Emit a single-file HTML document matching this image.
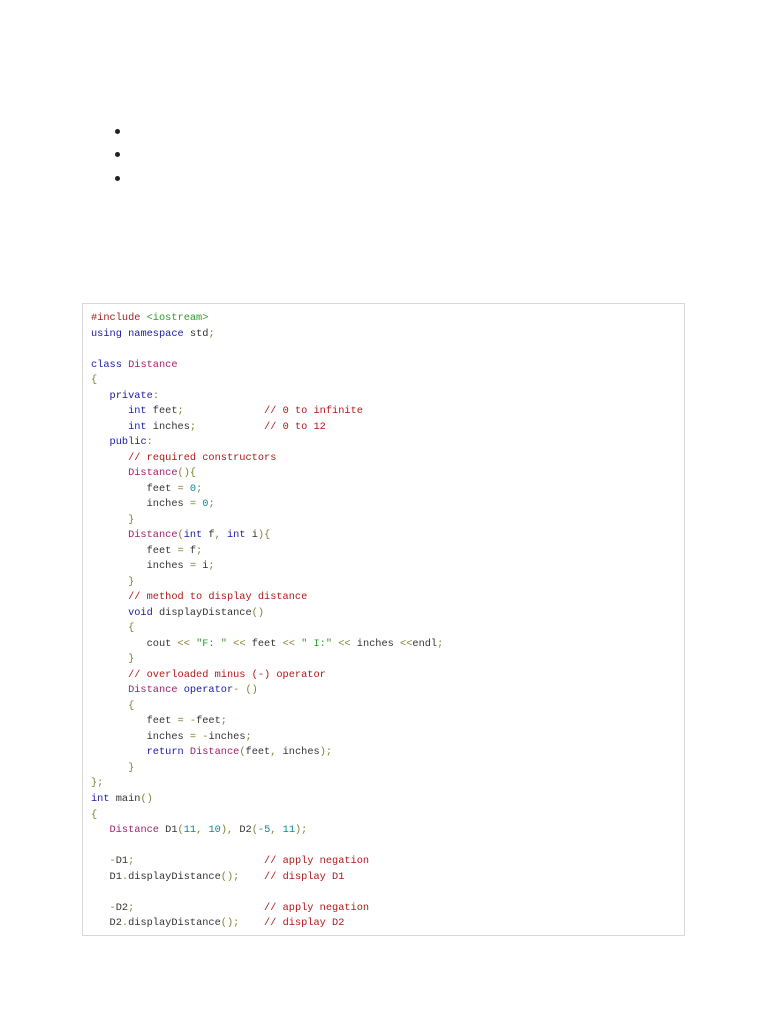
<!DOCTYPE html>
<html><head><meta charset="utf-8"><style>
body{margin:0;background:#fff;width:768px;height:1024px;position:relative;font-family:"Liberation Sans",sans-serif}
.b{position:absolute;left:115px;width:5px;height:5px;border-radius:50%;background:#222}
.box{position:absolute;left:82px;top:303px;width:601px;height:631px;border:1px solid #d8d8d8;background:#fff}
pre{margin:0;position:absolute;left:8px;top:7px;font-family:"Liberation Mono",monospace;font-size:10.3px;line-height:15.51px;color:#333}
.k{color:#1a1aa6}.c{color:#b01818}.t{color:#a0206e}.p{color:#808030}.n{color:#008c8c}.s{color:#2a9d2a}.pp{color:#9b1c1c}
</style></head><body>
<div class="b" style="top:129px"></div>
<div class="b" style="top:152px"></div>
<div class="b" style="top:176px"></div>
<div class="box"><pre><span class="pp">#include</span> <span class="s">&lt;iostream&gt;</span>
<span class="k">using</span> <span class="k">namespace</span> std<span class="p">;</span>

<span class="k">class</span> <span class="t">Distance</span>
<span class="p">{</span>
   <span class="k">private</span><span class="p">:</span>
      <span class="k">int</span> feet<span class="p">;</span>             <span class="c">// 0 to infinite</span>
      <span class="k">int</span> inches<span class="p">;</span>           <span class="c">// 0 to 12</span>
   <span class="k">public</span><span class="p">:</span>
      <span class="c">// required constructors</span>
      <span class="t">Distance</span><span class="p">(){</span>
         feet <span class="p">=</span> <span class="n">0</span><span class="p">;</span>
         inches <span class="p">=</span> <span class="n">0</span><span class="p">;</span>
      <span class="p">}</span>
      <span class="t">Distance</span><span class="p">(</span><span class="k">int</span> f<span class="p">,</span> <span class="k">int</span> i<span class="p">){</span>
         feet <span class="p">=</span> f<span class="p">;</span>
         inches <span class="p">=</span> i<span class="p">;</span>
      <span class="p">}</span>
      <span class="c">// method to display distance</span>
      <span class="k">void</span> displayDistance<span class="p">()</span>
      <span class="p">{</span>
         cout <span class="p">&lt;&lt;</span> <span class="s">"F: "</span> <span class="p">&lt;&lt;</span> feet <span class="p">&lt;&lt;</span> <span class="s">" I:"</span> <span class="p">&lt;&lt;</span> inches <span class="p">&lt;&lt;</span>endl<span class="p">;</span>
      <span class="p">}</span>
      <span class="c">// overloaded minus (-) operator</span>
      <span class="t">Distance</span> <span class="k">operator</span><span class="p">- ()</span>
      <span class="p">{</span>
         feet <span class="p">=</span> <span class="p">-</span>feet<span class="p">;</span>
         inches <span class="p">=</span> <span class="p">-</span>inches<span class="p">;</span>
         <span class="k">return</span> <span class="t">Distance</span><span class="p">(</span>feet<span class="p">,</span> inches<span class="p">);</span>
      <span class="p">}</span>
<span class="p">};</span>
<span class="k">int</span> main<span class="p">()</span>
<span class="p">{</span>
   <span class="t">Distance</span> D1<span class="p">(</span><span class="n">11</span><span class="p">,</span> <span class="n">10</span><span class="p">),</span> D2<span class="p">(</span><span class="n">-5</span><span class="p">,</span> <span class="n">11</span><span class="p">);</span>

   <span class="p">-</span>D1<span class="p">;</span>                     <span class="c">// apply negation</span>
   D1<span class="p">.</span>displayDistance<span class="p">();</span>    <span class="c">// display D1</span>

   <span class="p">-</span>D2<span class="p">;</span>                     <span class="c">// apply negation</span>
   D2<span class="p">.</span>displayDistance<span class="p">();</span>    <span class="c">// display D2</span></pre></div>
</body></html>
